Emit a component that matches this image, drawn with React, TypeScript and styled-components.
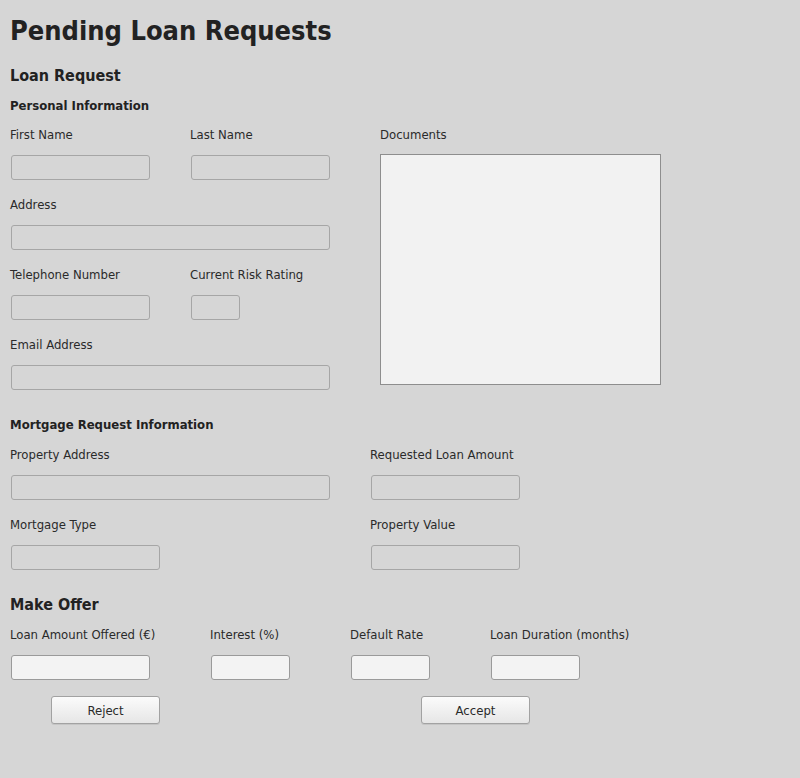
import React from "react";
import styled, { createGlobalStyle } from "styled-components";

const GlobalStyle = createGlobalStyle`
  html, body {
    margin: 0;
    padding: 0;
    background: #d6d6d6;
  }
  body {
    font-family: "DejaVu Sans Condensed", "DejaVu Sans", "Liberation Sans", sans-serif;
    font-stretch: semi-condensed;
    color: #222222;
  }
`;

const Page = styled.div`
  padding: 15px 10px 20px 10px;
  min-height: 778px;
  box-sizing: border-box;
  background: #d6d6d6;
`;

const Title = styled.h1`
  margin: 0 0 19px 0;
  font-size: 27px;
  line-height: 32px;
  font-weight: bold;
  color: #222222;
`;

const SectionTitle = styled.h2<{ $top?: number }>`
  margin: ${(p) => p.$top ?? 0}px 0 12px 0;
  font-size: 16px;
  line-height: 20px;
  font-weight: bold;
  color: #222222;
`;

const SubTitle = styled.h3<{ $top?: number; $bottom?: number }>`
  margin: ${(p) => p.$top ?? 0}px 0 ${(p) => p.$bottom ?? 13}px 0;
  font-size: 13px;
  line-height: 16px;
  font-weight: bold;
  color: #222222;
`;

const PersonalLayout = styled.div`
  display: flex;
  align-items: flex-start;
`;

const FieldGrid = styled.div<{ $cols: string }>`
  display: grid;
  grid-template-columns: ${(p) => p.$cols};
  row-gap: 17px;
  align-items: start;
`;

const Field = styled.div<{ $span?: number }>`
  display: flex;
  flex-direction: column;
  align-items: flex-start;
  grid-column: ${(p) => (p.$span ? `span ${p.$span}` : "auto")};
`;

const Label = styled.label`
  font-size: 13px;
  line-height: 16px;
  height: 16px;
  margin-bottom: 11px;
  color: #2a2a2a;
  white-space: nowrap;
`;

const Input = styled.input<{ $w: number; $enabled?: boolean }>`
  box-sizing: border-box;
  width: ${(p) => p.$w - 1}px;
  height: 25px;
  margin: 1px 0 0 1px;
  padding: 2px 4px;
  border: 1px solid ${(p) => (p.$enabled ? "#9a9a9a" : "#a6a6a6")};
  border-radius: 3px;
  background: ${(p) => (p.$enabled ? "#f3f3f3" : "#d6d6d6")};
  font-family: inherit;
  font-size: 13px;
  outline: none;
`;

const DocBox = styled.div`
  box-sizing: border-box;
  width: 281px;
  height: 231px;
  border: 1px solid #8e8e8e;
  background: #f2f2f2;
`;

const ButtonRow = styled.div`
  display: flex;
  margin-top: 16px;
`;

const Button = styled.button<{ $left: number }>`
  box-sizing: border-box;
  width: 109px;
  height: 28px;
  margin-left: ${(p) => p.$left}px;
  border: 1px solid #a2a2a2;
  border-radius: 3px;
  background: linear-gradient(#fbfbfb, #e6e6e6);
  box-shadow: 0 1px 0 rgba(0, 0, 0, 0.08);
  font-family: inherit;
  font-stretch: semi-condensed;
  font-size: 13px;
  color: #2a2a2a;
  padding: 0;
`;

export default function App() {
  return (
    <>
      <GlobalStyle />
      <Page>
        <Title>Pending Loan Requests</Title>
        <SectionTitle>Loan Request</SectionTitle>
        <SubTitle>Personal Information</SubTitle>
        <PersonalLayout>
          <FieldGrid $cols="180px 190px">
            <Field>
              <Label>First Name</Label>
              <Input $w={140} disabled />
            </Field>
            <Field>
              <Label>Last Name</Label>
              <Input $w={140} disabled />
            </Field>
            <Field $span={2}>
              <Label>Address</Label>
              <Input $w={320} disabled />
            </Field>
            <Field>
              <Label>Telephone Number</Label>
              <Input $w={140} disabled />
            </Field>
            <Field>
              <Label>Current Risk Rating</Label>
              <Input $w={50} disabled />
            </Field>
            <Field $span={2}>
              <Label>Email Address</Label>
              <Input $w={320} disabled />
            </Field>
          </FieldGrid>
          <Field>
            <Label>Documents</Label>
            <DocBox />
          </Field>
        </PersonalLayout>

        <SubTitle $top={27} $bottom={14}>
          Mortgage Request Information
        </SubTitle>
        <FieldGrid $cols="360px 360px">
          <Field>
            <Label>Property Address</Label>
            <Input $w={320} disabled />
          </Field>
          <Field>
            <Label>Requested Loan Amount</Label>
            <Input $w={150} disabled />
          </Field>
          <Field>
            <Label>Mortgage Type</Label>
            <Input $w={150} disabled />
          </Field>
          <Field>
            <Label>Property Value</Label>
            <Input $w={150} disabled />
          </Field>
        </FieldGrid>

        <SectionTitle $top={25}>Make Offer</SectionTitle>
        <FieldGrid $cols="200px 140px 140px 200px">
          <Field>
            <Label>Loan Amount Offered (€)</Label>
            <Input $w={140} $enabled />
          </Field>
          <Field>
            <Label>Interest (%)</Label>
            <Input $w={80} $enabled />
          </Field>
          <Field>
            <Label>Default Rate</Label>
            <Input $w={80} $enabled />
          </Field>
          <Field>
            <Label>Loan Duration (months)</Label>
            <Input $w={90} $enabled />
          </Field>
        </FieldGrid>
        <ButtonRow>
          <Button $left={41}>Reject</Button>
          <Button $left={261}>Accept</Button>
        </ButtonRow>
      </Page>
    </>
  );
}
